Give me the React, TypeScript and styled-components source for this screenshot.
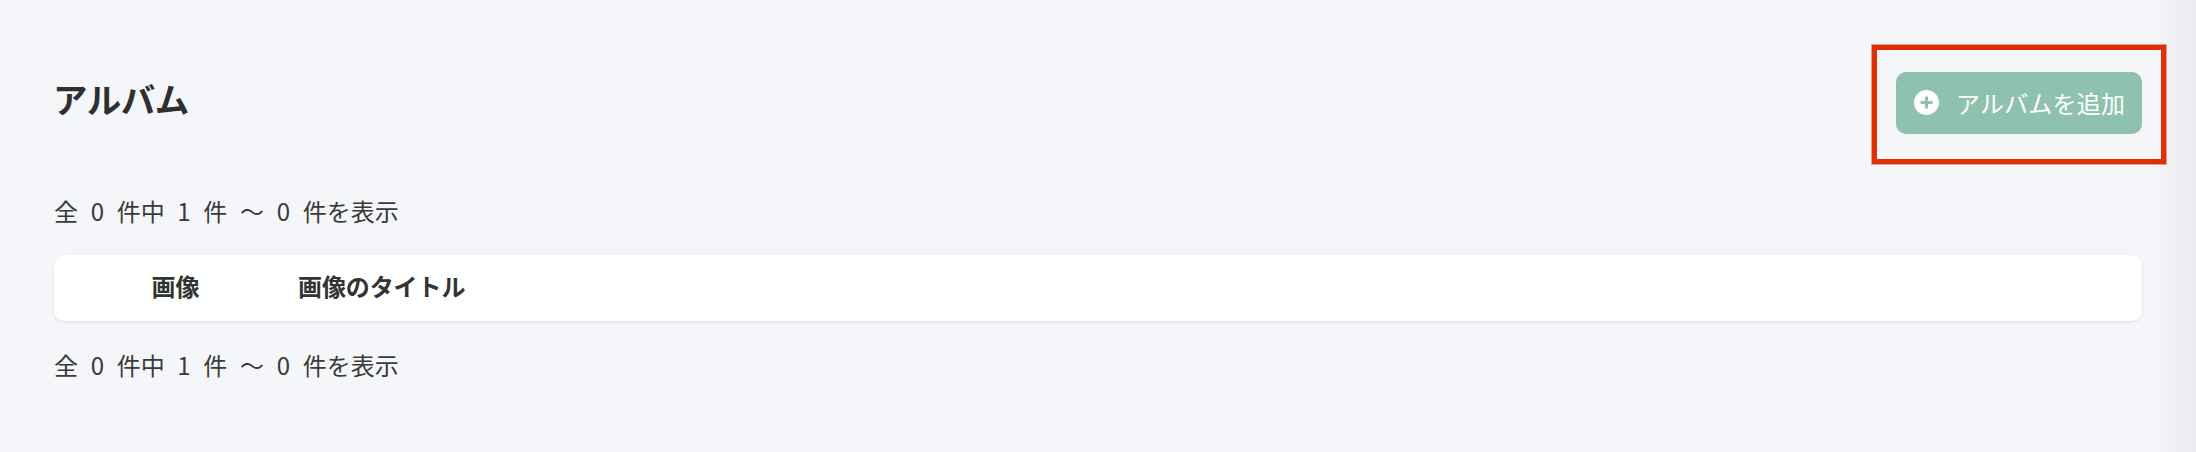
import React from "react";
import styled, { createGlobalStyle } from "styled-components";

const Global = createGlobalStyle`
  html, body { margin: 0; padding: 0; background: #f5f6fa; }
  body {
    font-family: "Noto Sans CJK JP", "Noto Sans", sans-serif;
    color: #333;
    overflow: hidden;
  }
`;

const Page = styled.main`
  position: relative;
  box-sizing: border-box;
  width: 2196px;
  height: 452px;
  padding: 72px 54px 0;
  background: #f5f6fa;
  &::after {
    content: "";
    position: absolute;
    top: 0;
    right: 0;
    bottom: 0;
    width: 46px;
    background: linear-gradient(90deg, rgba(236, 237, 242, 0) 0%, #edeef2 75%, #ebecf0 100%);
    pointer-events: none;
  }
`;

const Header = styled.header`
  display: flex;
  justify-content: space-between;
  align-items: flex-start;
  height: 62px;
  margin-bottom: 61px;
`;

const Title = styled.h1`
  margin: 0 0 0 -1px;
  font-size: 34.5px;
  font-weight: 700;
  line-height: 52px;
  letter-spacing: -0.5px;
  color: #2f2f2f;
`;

const AddButton = styled.button`
  position: relative;
  z-index: 1;
  display: flex;
  align-items: center;
  gap: 17px;
  box-sizing: border-box;
  width: 246px;
  height: 62px;
  padding: 0 0 2px 18px;
  border: 0;
  border-radius: 10px;
  background: #8fc2ae;
  color: #fff;
  font-family: inherit;
  font-size: 24px;
  font-weight: 400;
  letter-spacing: 0.2px;
`;

const Highlight = styled.div`
  position: absolute;
  z-index: 2;
  left: 1872px;
  top: 45px;
  box-sizing: border-box;
  width: 294px;
  height: 119px;
  border: 5px solid #de2f05;
  outline: 1px solid rgba(222, 47, 5, 0.45);
`;

const Status = styled.p`
  margin: 0;
  font-size: 24px;
  line-height: 32px;
  font-weight: 400;
  word-spacing: 7.3px;
  color: #3a3a3a;
  white-space: pre;
`;

const Card = styled.div`
  position: relative;
  z-index: 1;
  display: grid;
  grid-template-columns: 243px 1fr;
  align-items: center;
  height: 66px;
  margin: 28px 0 28px;
  padding-bottom: 5px;
  box-sizing: border-box;
  border-radius: 10px;
  background: #fff;
  box-shadow: 0 1px 3px rgba(0, 0, 0, 0.1);
`;

const HeadCell = styled.div<{ $center?: boolean }>`
  font-size: 24px;
  font-weight: 700;
  letter-spacing: -0.1px;
  color: #333;
  text-align: ${(p) => (p.$center ? "center" : "left")};
  padding-left: ${(p) => (p.$center ? "0" : "1px")};
`;

const PlusIcon = () => (
  <svg width="25" height="25" viewBox="0 0 25 25" aria-hidden="true">
    <circle cx="12.5" cy="12.5" r="12.5" fill="#fff" />
    <path d="M12.5 6.5v12M6.5 12.5h12" stroke="#8fc2ae" strokeWidth="3" />
  </svg>
);

const text = "全 0 件中 1 件 〜 0 件を表示";

export default function App() {
  return (
    <Page>
      <Global />
      <Header>
        <Title>アルバム</Title>
        <AddButton>
          <PlusIcon />
          アルバムを追加
        </AddButton>
      </Header>
      <Highlight />
      <Status>{text}</Status>
      <Card>
        <HeadCell $center>画像</HeadCell>
        <HeadCell>画像のタイトル</HeadCell>
      </Card>
      <Status>{text}</Status>
    </Page>
  );
}
